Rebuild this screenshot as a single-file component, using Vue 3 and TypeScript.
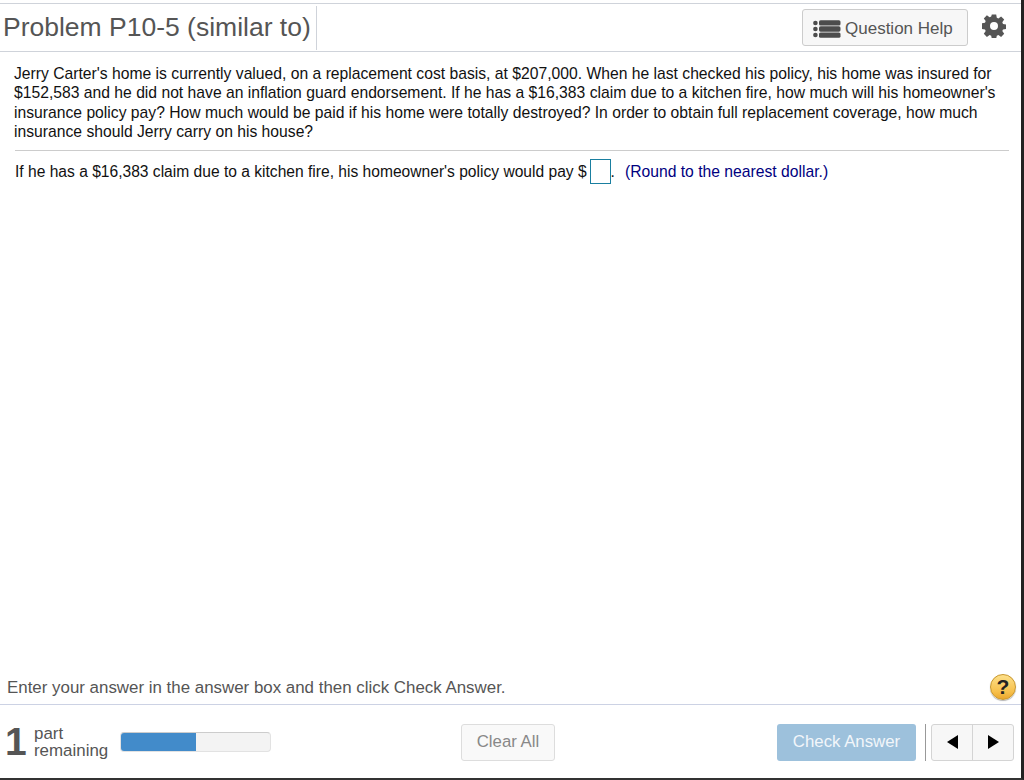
<script setup lang="ts">
const question =
  "Jerry Carter's home is currently valued, on a replacement cost basis, at $207,000. When he last checked his policy, his home was insured for $152,583 and he did not have an inflation guard endorsement. If he has a $16,383 claim due to a kitchen fire, how much will his homeowner's insurance policy pay? How much would be paid if his home were totally destroyed? In order to obtain full replacement coverage, how much insurance should Jerry carry on his house?"

const progress = 50
</script>

<template>
  <div class="screen">
    <div class="player">
      <header class="top">
        <h1 class="title">Problem P10-5 (similar to)</h1>
        <button class="help" type="button">
          <svg class="list-icon" width="28" height="18" viewBox="0 0 28 18" fill="#4c4c4c">
            <circle cx="2.4" cy="3" r="2.3" />
            <circle cx="2.4" cy="9" r="2.3" />
            <circle cx="2.4" cy="15" r="2.3" />
            <rect x="6" y="0.2" width="21.5" height="5.4" rx="1.6" />
            <rect x="6" y="6.3" width="21.5" height="5.4" rx="1.6" />
            <rect x="6" y="12.4" width="21.5" height="5.4" rx="1.6" />
          </svg>
          Question Help
        </button>
        <svg class="gear" width="24" height="24" viewBox="0 0 24 24">
          <path
            fill="#555"
            fill-rule="evenodd"
            d="M9.8 0.5h4.4l.6 3.2 1.6.7 2.7-1.9 3.1 3.1-1.9 2.7.7 1.6 3 .6v4.4l-3 .6-.7 1.6 1.9 2.7-3.1 3.1-2.7-1.9-1.6.7-.6 3H9.8l-.6-3-1.6-.7-2.7 1.9-3.1-3.1 1.9-2.7-.7-1.6-3-.6V9.3l3-.6.7-1.6-1.9-2.7 3.1-3.1 2.7 1.9 1.6-.7zM12 8a4 4 0 1 0 0 8 4 4 0 0 0 0-8z"
          />
        </svg>
      </header>

      <main class="content">
        <p class="question">{{ question }}</p>
        <hr class="rule" />
        <p class="answer">
          If he has a $16,383 claim due to a kitchen fire, his homeowner's policy would pay $<input
            class="box"
            type="text"
            aria-label="Answer"
          />.<span class="hint">(Round to the nearest dollar.)</span>
        </p>
      </main>

      <div class="instruction">
        <span class="note">Enter your answer in the answer box and then click Check Answer.</span>
        <span class="tip">?</span>
      </div>

      <footer class="bottom">
        <div class="parts">
          <span class="count">1</span>
          <span class="label">part<br />remaining</span>
          <div class="bar"><div class="fill" :style="{ width: progress + '%' }"></div></div>
        </div>
        <button class="clear" type="button">Clear All</button>
        <div class="actions">
          <button class="check" type="button">Check Answer</button>
          <span class="sep"></span>
          <div class="nav">
            <button type="button" aria-label="Previous">
              <svg width="11" height="14" viewBox="0 0 11 14"><path d="M11 0v14L0 7z" /></svg>
            </button>
            <button type="button" aria-label="Next">
              <svg width="11" height="14" viewBox="0 0 11 14"><path d="M0 0v14l11-7z" /></svg>
            </button>
          </div>
        </div>
      </footer>
    </div>
  </div>
</template>

<style>
html,
body {
  margin: 0;
  background: #fff;
}
</style>

<style scoped>
.screen {
  width: 1024px;
  height: 780px;
  box-sizing: border-box;
  padding-top: 3px;
  border-right: 3px solid #222;
  border-bottom: 2px solid #333;
  font-family: "Liberation Sans", Arial, sans-serif;
  overflow: hidden;
}
.player {
  height: 100%;
  display: flex;
  flex-direction: column;
  border-top: 1px solid #cfd3da;
}
.top {
  height: 48px;
  flex: none;
  box-sizing: border-box;
  display: flex;
  align-items: center;
  padding: 1px 15px 0 3px;
  border-bottom: 1px solid #cfd3da;
}
.title {
  margin: 0;
  height: 44px;
  line-height: 42px;
  padding-right: 5px;
  border-right: 1px solid #cfd3da;
  font-size: 26.5px;
  font-weight: 400;
  color: #555;
  white-space: nowrap;
}
.help {
  margin: 0 0 2px auto;
  width: 166px;
  height: 37px;
  box-sizing: border-box;
  display: flex;
  align-items: center;
  padding: 3px 0 0 10px;
  background: #f7f7f7;
  border: 1px solid #ccc;
  border-radius: 3px;
  color: #555;
  font: 17px "Liberation Sans", Arial, sans-serif;
  white-space: nowrap;
}
.list-icon {
  margin-right: 4px;
}
.gear {
  margin: 0 0 4px 14px;
}
.content {
  flex: 1;
  padding: 12px 12px 0 14px;
  color: #111;
  font-size: 15.7px;
}
.question {
  margin: 0;
  line-height: 19.4px;
}
.rule {
  margin: 8px 0 0 1px;
  height: 1px;
  border: 0;
  background: #ccc;
}
.answer {
  margin: 8px 0 0 1px;
  height: 26px;
  line-height: 26px;
  font-size: 15.6px;
  white-space: nowrap;
}
.box {
  width: 21px;
  height: 25px;
  box-sizing: border-box;
  margin: -2px 0 0 3px;
  padding: 0;
  vertical-align: middle;
  border: 1px solid #1a7fa0;
  background: #fff;
  outline: 0;
}
.hint {
  margin-left: 10px;
  color: #000080;
  font-size: 15.7px;
}
.instruction {
  height: 35px;
  flex: none;
  box-sizing: border-box;
  display: flex;
  align-items: center;
  justify-content: space-between;
  padding: 0 5px 0 7px;
  border-bottom: 1px solid #ccd2e4;
  color: #555;
  font-size: 16.9px;
}
.note {
  padding-top: 2px;
}
.tip {
  width: 26px;
  height: 26px;
  box-sizing: border-box;
  display: flex;
  align-items: center;
  justify-content: center;
  border-radius: 50%;
  border: 1px solid #c8962c;
  background: linear-gradient(#fde08a, #f7c04c 70%, #eba62c);
  box-shadow: 0 1px 1px rgba(0, 0, 0, 0.3);
  color: #222;
  font-size: 21px;
  font-weight: 700;
}
.bottom {
  height: 74px;
  flex: none;
  box-sizing: border-box;
  display: flex;
  align-items: center;
  padding: 0 7px 0 5px;
  color: #555;
}
.parts {
  width: 456px;
  display: flex;
  align-items: center;
}
.count {
  width: 29px;
  font-size: 39px;
  font-weight: 700;
  line-height: 40px;
}
.label {
  width: 86px;
  font-size: 16.9px;
  line-height: 17px;
}
.bar {
  width: 151px;
  height: 20px;
  box-sizing: border-box;
  background: #f3f3f3;
  border: 1px solid #e2e2e2;
  border-top-color: #ccc;
  border-radius: 4px;
  overflow: hidden;
}
.fill {
  height: 100%;
  background: #428bca;
}
.clear {
  width: 94px;
  height: 37px;
  box-sizing: border-box;
  padding: 0;
  background: #f9f9f9;
  border: 1px solid #ddd;
  border-radius: 3px;
  color: #888;
  font: 16.8px "Liberation Sans", Arial, sans-serif;
}
.actions {
  margin-left: auto;
  display: flex;
  align-items: center;
}
.check {
  width: 139px;
  height: 37px;
  padding: 0;
  background: #9dc1dc;
  border: 0;
  border-radius: 3px;
  color: #f2f6fa;
  font: 16.8px "Liberation Sans", Arial, sans-serif;
}
.sep {
  width: 1px;
  height: 37px;
  margin: 0 5px 0 9px;
  background: #999;
}
.nav {
  display: flex;
  height: 37px;
  box-sizing: border-box;
  border: 1px solid #d4d4d4;
  border-radius: 3px;
  background: #f7f7f7;
}
.nav button {
  width: 41px;
  padding: 0;
  border: 0;
  background: none;
  display: flex;
  align-items: center;
  justify-content: center;
}
.nav button:first-child {
  width: 40px;
}
.nav button + button {
  border-left: 1px solid #d4d4d4;
}
</style>
